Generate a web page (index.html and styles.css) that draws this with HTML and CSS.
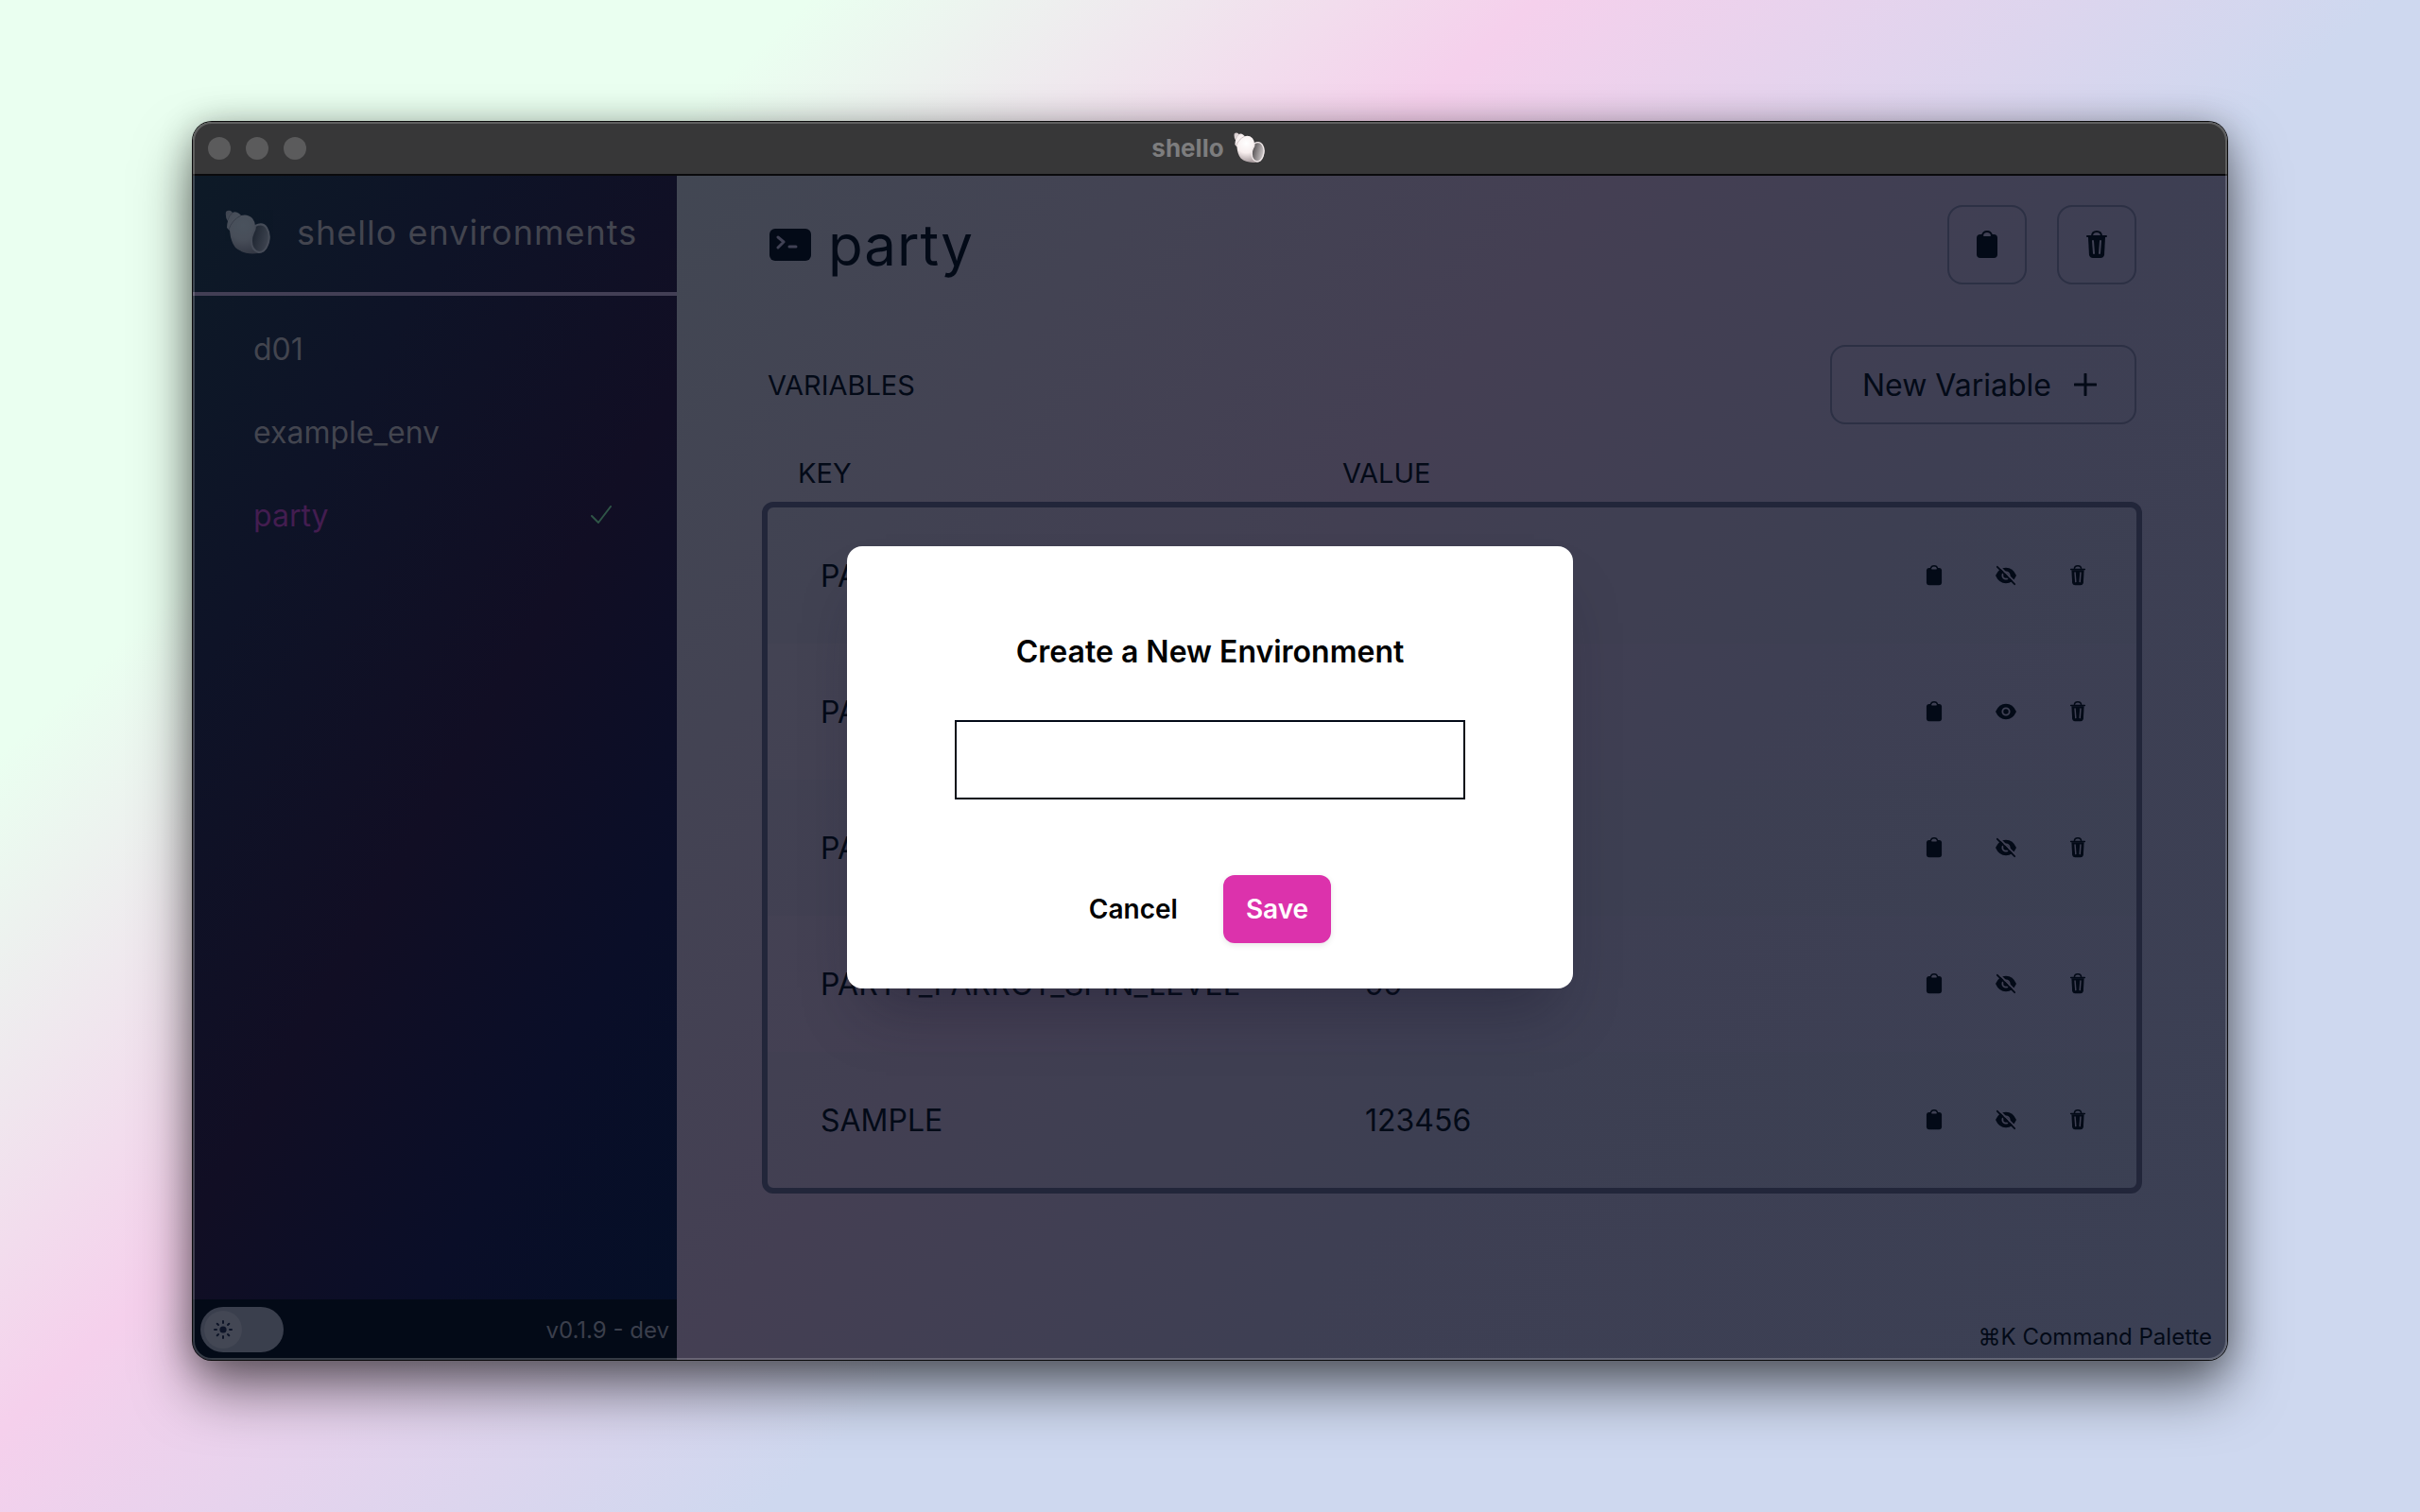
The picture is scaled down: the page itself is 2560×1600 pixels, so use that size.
FILE: index.html
```html
<!DOCTYPE html>
<html lang="en">
<head>
    <meta charset="UTF-8">
    <title>shello</title>
    <link rel="stylesheet" href="styles.css">
</head>
<body>
<svg class="sprite" aria-hidden="true">
    <defs>
        <radialGradient id="shellBody" cx="0.4" cy="0.35" r="0.65">
            <stop offset="0" stop-color="#fff"/>
            <stop offset="0.5" stop-color="#f8efef"/>
            <stop offset="1" stop-color="#a89c9f"/>
        </radialGradient>
        <linearGradient id="shellMouth" x1="0" y1="0.3" x2="1" y2="0.7">
            <stop offset="0" stop-color="#4c484a"/>
            <stop offset="1" stop-color="#d8d2d3"/>
        </linearGradient>
    </defs>
    <symbol id="i-shell" viewBox="0 0 48 48">
        <path fill="url(#shellBody)" d="M1 2 Q3 0 6 1 L8 3 Q11 1 15 4 L17 6 Q24 4 29 9 Q32 13 32 17 Q40 13 44 19 Q49 27 46 37 Q43 46 35 46 Q20 48 11 40 Q6 34 5 22 L2 19 Q2 15 3 12 Q0 8 1 2 Z"/>
        <path class="whorl" d="M3 11 Q4 6 8 3 M4 21 Q7 11 17 6"/>
        <path fill="url(#shellMouth)" stroke="#efe7e8" stroke-width="2" d="M32 17 Q40 13 44 19 Q49 27 45 37 Q42 45 36 45 Q28 43 28 33 Q28 28 30 24 Q32 21 32 17 Z"/>
    </symbol>
    <symbol id="i-terminal" viewBox="0 0 44 34">
        <rect width="44" height="34" rx="6"/>
        <path class="cut" d="M9 9 L15 14 L9 20 M21 19 H28"/>
    </symbol>
    <symbol id="i-clipboard" viewBox="0 0 24 30">
        <rect x="1" y="4" width="22" height="25" rx="4"/>
        <path class="line" d="M7 7 V5 Q8 1 12 1 Q16 1 17 5 V7"/>
        <path class="cut thin" d="M9 5 H15"/>
    </symbol>
    <symbol id="i-trash" viewBox="0 0 24 30">
        <path d="M3 7 H21 L20 26 Q19 29 16 29 H8 Q5 29 4 26 Z"/>
        <path class="line" d="M2 6 H22 M7 6 Q7 1 12 1 Q17 1 17 6"/>
        <path class="cut thin" d="M8 11 L9 24 M16 11 L15 24"/>
    </symbol>
    <symbol id="i-eye" viewBox="0 0 24 24">
        <path d="M0 12 Q4 3 12 3 Q20 3 24 12 Q20 21 12 21 Q4 21 0 12 Z"/>
        <circle class="cut thin" cx="12" cy="12" r="4"/>
    </symbol>
    <symbol id="i-eye-off" viewBox="0 0 24 24">
        <path d="M0 12 Q4 3 12 3 Q20 3 24 12 Q20 21 12 21 Q4 21 0 12 Z"/>
        <circle class="cut thin" cx="12" cy="12" r="4"/>
        <path class="cut thin" d="M4 1 L23 20"/>
        <path class="line" d="M2 2 L22 22"/>
    </symbol>
    <symbol id="i-plus" viewBox="0 0 24 24">
        <path class="line bold" d="M12 1 V23 M1 12 H23"/>
    </symbol>
    <symbol id="i-check" viewBox="0 0 24 20">
        <path class="line" d="M2 11 L9 18 L22 1"/>
    </symbol>
    <symbol id="i-sun" viewBox="0 0 20 20">
        <circle cx="10" cy="10" r="3.6"/>
        <path class="line" d="M10 1 V3 M10 17 V19 M1 10 H3 M17 10 H19 M3.7 3.7 L5 5 M15 15 L16.3 16.3 M16.3 3.7 L15 5 M5 15 L3.7 16.3"/>
    </symbol>
</svg>

<div class="window">
    <header class="titlebar">
        <div class="lights">
            <span></span>
            <span></span>
            <span></span>
        </div>
        <div class="titlebar-name">shello <svg class="title-shell"><use href="#i-shell"/></svg></div>
    </header>

    <div class="app">
        <aside class="sidebar">
            <div class="brand">
                <svg class="brand-shell"><use href="#i-shell"/></svg>
                <span>shello environments</span>
            </div>
            <nav class="envs">
                <a href="#d01">d01</a>
                <a href="#example_env">example_env</a>
                <a href="#party" class="active">party <svg class="check"><use href="#i-check"/></svg></a>
            </nav>
            <div class="status">
                <label class="toggle">
                    <input type="checkbox" aria-label="Dark mode">
                    <span class="knob"><svg><use href="#i-sun"/></svg></span>
                </label>
                <span>v0.1.9 - dev</span>
            </div>
        </aside>

        <main class="content">
            <div class="env-head">
                <svg class="terminal"><use href="#i-terminal"/></svg>
                <h1>party</h1>
                <button class="btn square" aria-label="Copy environment"><svg><use href="#i-clipboard"/></svg></button>
                <button class="btn square" aria-label="Delete environment"><svg><use href="#i-trash"/></svg></button>
            </div>
            <div class="vars-head">
                <h2>VARIABLES</h2>
                <button class="btn">New Variable <svg class="plus"><use href="#i-plus"/></svg></button>
            </div>
            <table class="vars">
                <thead>
                    <tr><th>KEY</th><th>VALUE</th><th></th></tr>
                </thead>
                <tbody>
                    <tr>
                        <td>PARTY_MODE</td>
                        <td></td>
                        <td>
                            <div class="actions">
                                <button aria-label="Copy"><svg><use href="#i-clipboard"/></svg></button>
                                <button aria-label="Hide"><svg><use href="#i-eye-off"/></svg></button>
                                <button aria-label="Delete"><svg><use href="#i-trash"/></svg></button>
                            </div>
                        </td>
                    </tr>
                    <tr>
                        <td>PARTY_KEY</td>
                        <td></td>
                        <td>
                            <div class="actions">
                                <button aria-label="Copy"><svg><use href="#i-clipboard"/></svg></button>
                                <button aria-label="Show"><svg><use href="#i-eye"/></svg></button>
                                <button aria-label="Delete"><svg><use href="#i-trash"/></svg></button>
                            </div>
                        </td>
                    </tr>
                    <tr>
                        <td>PARTY_PARROT</td>
                        <td></td>
                        <td>
                            <div class="actions">
                                <button aria-label="Copy"><svg><use href="#i-clipboard"/></svg></button>
                                <button aria-label="Hide"><svg><use href="#i-eye-off"/></svg></button>
                                <button aria-label="Delete"><svg><use href="#i-trash"/></svg></button>
                            </div>
                        </td>
                    </tr>
                    <tr>
                        <td>PARTY_PARROT_SPIN_LEVEL</td>
                        <td>99</td>
                        <td>
                            <div class="actions">
                                <button aria-label="Copy"><svg><use href="#i-clipboard"/></svg></button>
                                <button aria-label="Hide"><svg><use href="#i-eye-off"/></svg></button>
                                <button aria-label="Delete"><svg><use href="#i-trash"/></svg></button>
                            </div>
                        </td>
                    </tr>
                    <tr>
                        <td>SAMPLE</td>
                        <td>123456</td>
                        <td>
                            <div class="actions">
                                <button aria-label="Copy"><svg><use href="#i-clipboard"/></svg></button>
                                <button aria-label="Hide"><svg><use href="#i-eye-off"/></svg></button>
                                <button aria-label="Delete"><svg><use href="#i-trash"/></svg></button>
                            </div>
                        </td>
                    </tr>
                </tbody>
            </table>
            <div class="hint">⌘K Command Palette</div>
        </main>
    </div>

    <div class="overlay">
        <form class="modal" role="dialog">
            <label for="envName">Create a New Environment</label>
            <input type="text" id="envName">
            <div class="modal-buttons">
                <button type="button" class="cancel">Cancel</button>
                <button type="button" class="save">Save</button>
            </div>
        </form>
    </div>
</div>
</body>
</html>
```
FILE: styles.css
```css
*{
    box-sizing: border-box;
}
body{
    margin: 0;
    min-height: 100vh;
    padding: 129px 204px 161px;
    display: flex;
    font-family: Inter, "Liberation Sans", sans-serif;
    font-size: 32px;
    color: #030a17;
    background: linear-gradient(137deg, #eafff0 20%, #f5d0ec 38%, #ced8ef 59%);
}
button{
    font: inherit;
    color: inherit;
    background: none;
    border: 0;
    padding: 0;
}
svg{
    display: block;
    fill: currentColor;
    flex: none;
}
.sprite{
    position: absolute;
    width: 0;
    height: 0;
}
.line{
    fill: none;
    stroke: currentColor;
    stroke-width: 2;
    stroke-linecap: round;
    stroke-linejoin: round;
}
.line.bold{
    stroke-width: 3;
}
.cut{
    fill: none;
    stroke: #404154;
    stroke-width: 3;
    stroke-linecap: round;
    stroke-linejoin: round;
}
.cut.thin{
    stroke-width: 2;
}
.whorl{
    fill: none;
    stroke: #b9aeb1;
    stroke-width: 1;
}
.window{
    position: relative;
    flex: 1;
    display: flex;
    flex-direction: column;
    border-radius: 20px;
    overflow: hidden;
    box-shadow: 0 0 0 1px #0b0b0c, 0 32px 60px rgba(0,0,0,0.5), 0 4px 36px rgba(0,0,0,0.3);
}
/* light rim drawn over everything in the window */
.window::after{
    content: "";
    position: absolute;
    inset: 0;
    border-radius: 20px;
    box-shadow: inset 0 0 0 2px rgba(255,255,255,0.2);
    pointer-events: none;
}
.titlebar{
    height: 57px;
    display: grid;
    grid-template-columns: 1fr auto 1fr;
    align-items: center;
    padding: 0 16px;
    background: #373738;
    border-bottom: 2px solid #0a0a0c;
}
.lights{
    display: flex;
    gap: 16px;
}
.lights span{
    width: 24px;
    height: 24px;
    border-radius: 50%;
    background: #5b5b5c;
}
.titlebar-name{
    display: flex;
    align-items: center;
    gap: 10px;
    margin-right: 4px;
    font-size: 26px;
    font-weight: 700;
    line-height: 32px;
    color: #7d7d7e;
}
.title-shell{
    width: 33px;
    height: 33px;
}
.app{
    flex: 1;
    display: flex;
}
.sidebar{
    width: 512px;
    display: flex;
    flex-direction: column;
    color: #43454f;
    background: linear-gradient(120deg, #0d1a27, #0e1327 25%, #110e24 52%, #0a0e28 75%, #040f27);
}
.brand{
    height: 127px;
    display: flex;
    align-items: center;
    gap: 28px;
    padding: 0 34px 4px;
    font-size: 36px;
    letter-spacing: 1px;
    border-bottom: 4px solid #433f55;
}
.brand-shell{
    width: 48px;
    height: 48px;
    opacity: 0.25;
}
.envs{
    flex: 1;
    display: flex;
    flex-direction: column;
    padding: 12px 64px;
}
.envs a{
    height: 88px;
    display: flex;
    align-items: center;
    justify-content: space-between;
    color: inherit;
    text-decoration: none;
}
.envs .active{
    color: #431d50;
}
.check{
    width: 24px;
    height: 20px;
    margin-right: 4px;
    color: #2f5547;
}
.status{
    height: 64px;
    display: flex;
    align-items: center;
    justify-content: space-between;
    padding: 0 8px;
    font-size: 24px;
    color: #3b3f4c;
    background: #030a17;
}
.toggle{
    width: 88px;
    height: 48px;
    padding: 4px;
    border-radius: 24px;
    background: #3a3f4d;
}
.toggle input{
    position: absolute;
    opacity: 0;
}
.knob{
    width: 40px;
    height: 40px;
    display: flex;
    align-items: center;
    justify-content: center;
    border-radius: 50%;
    color: #0d1427;
    background: #434754;
}
.knob svg{
    width: 20px;
    height: 20px;
}
.content{
    flex: 1;
    display: flex;
    flex-direction: column;
    padding: 31px 90px 0;
    background: linear-gradient(128deg, #424753, #443f53 38%, #3e3f53 60%, #3b4054);
}
.env-head{
    display: flex;
    align-items: center;
    gap: 32px;
    padding: 0 6px 0 8px;
}
.terminal{
    width: 44px;
    height: 34px;
    margin-right: -14px;
}
h1{
    flex: 1;
    margin: 0;
    font-size: 60px;
    font-weight: 400;
    letter-spacing: 1px;
}
h2{
    margin: 0;
    font-size: 29px;
    font-weight: 400;
}
.btn{
    height: 84px;
    display: flex;
    align-items: center;
    gap: 24px;
    padding: 0 40px 0 32px;
    border: 2px solid #2c3044;
    border-radius: 16px;
}
.square{
    width: 84px;
    padding: 0;
    justify-content: center;
}
.square svg{
    width: 24px;
    height: 30px;
}
.plus{
    width: 24px;
    height: 24px;
}
.vars-head{
    display: flex;
    align-items: center;
    justify-content: space-between;
    padding: 64px 6px 0;
}
.vars{
    width: 100%;
    margin-top: 21px;
    padding: 0 6px;
    border-spacing: 0;
    table-layout: fixed;
}
.vars th{
    height: 67px;
    padding: 0 32px 6px;
    font-size: 29px;
    font-weight: 400;
    text-align: left;
}
.vars th:nth-child(1){
    width: 576px;
}
.vars th:nth-child(3){
    width: 320px;
}
.vars td{
    height: 144px;
    padding: 0 50px 0 56px;
}
.vars tbody{
    outline: 6px solid #22263a;
    border-radius: 6px;
}
.vars tbody tr:nth-child(odd) td{
    background: rgba(50,66,80,0.08);
}
.actions{
    display: flex;
    justify-content: flex-end;
    gap: 52px;
}
.actions svg{
    width: 24px;
    height: 22px;
}
.hint{
    margin-top: auto;
    margin-right: -74px;
    padding-bottom: 10px;
    text-align: right;
    font-size: 24px;
}
.overlay{
    position: absolute;
    inset: 56px 0 0;
    display: flex;
    align-items: center;
    justify-content: center;
}
.modal{
    width: 768px;
    display: flex;
    flex-direction: column;
    align-items: center;
    padding: 92px 48px 48px;
    border-radius: 16px;
    background: #fff;
    color: #000;
    box-shadow: 0 40px 60px -20px rgba(20,20,40,0.35);
}
.modal label{
    font-weight: 600;
    line-height: 40px;
}
.modal input{
    width: 540px;
    height: 84px;
    margin: 52px 0 80px;
    padding: 0 24px;
    font: inherit;
    border: 2px solid #030a17;
    background: #fff;
}
.modal-buttons{
    display: flex;
    gap: 48px;
    font-size: 28px;
    font-weight: 600;
}
.save{
    height: 72px;
    padding: 0 24px;
    border-radius: 12px;
    color: #fff;
    background: #dc32ac;
    box-shadow: 0 2px 6px rgba(0,0,0,0.1);
}
```
